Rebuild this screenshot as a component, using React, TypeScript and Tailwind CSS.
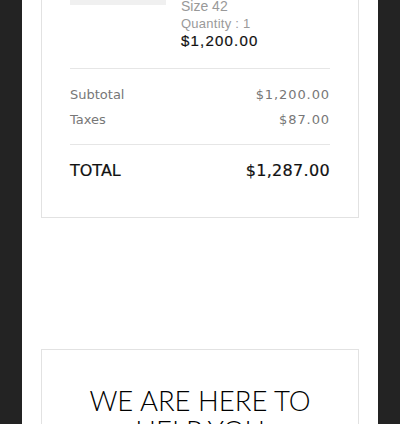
export default function App() {
  return (
    <div className="min-h-screen bg-[#232323] overflow-hidden">
      <div className="mx-[22px] bg-white px-[19px] pb-10 min-h-[424px]">
        <div className="-mt-[97px] border border-[#e2e2e2] px-[28px] pt-[29px] pb-[35px]">
          <div className="flex gap-[15px]">
            <div className="w-[96px] h-[72px] bg-[#f0f0f0] shrink-0" />
            <div className="flex flex-col pt-[65px] font-['Liberation_Sans',sans-serif]">
              <div className="h-[17px] text-[14px] leading-[17px] text-[#999]">Size 42</div>
              <div className="h-[17px] text-[13px] leading-[17px] text-[#9a9a9a] tracking-[0.02em]">Quantity : 1</div>
              <div className="h-[18px] text-[15px] leading-[18px] text-[#111] tracking-[1.2px] [-webkit-text-stroke:0.2px_#111]">$1,200.00</div>
            </div>
          </div>
          <div className="mt-[18px] h-px bg-[#e6e6e6]" />
          <div className="font-['DejaVu_Sans',sans-serif] text-[13px] text-[#777]">
            <div className="mt-[16px] flex justify-between h-[20px] leading-[20px]">
              <span>Subtotal</span>
              <span className="tracking-[0.07em]">$1,200.00</span>
            </div>
            <div className="mt-[5px] flex justify-between h-[20px] leading-[20px]">
              <span>Taxes</span>
              <span className="tracking-[0.07em]">$87.00</span>
            </div>
          </div>
          <div className="mt-[14px] h-px bg-[#e6e6e6]" />
          <div className="mt-[15px] flex justify-between h-[22px] leading-[22px] font-['DejaVu_Sans',sans-serif] text-[16px] text-[#111] [-webkit-text-stroke:0.2px_#111]">
            <span>TOTAL</span>
            <span className="tracking-[0.02em]">$1,287.00</span>
          </div>
        </div>
        <div className="mt-[131px] border border-[#e2e2e2] pt-[36px] pb-10 text-center">
          <h2 className="font-['Lato',sans-serif] font-light text-[27.5px] leading-[30px] text-black px-8">
            WE ARE HERE TO HELP YOU
          </h2>
        </div>
      </div>
    </div>
  );
}
